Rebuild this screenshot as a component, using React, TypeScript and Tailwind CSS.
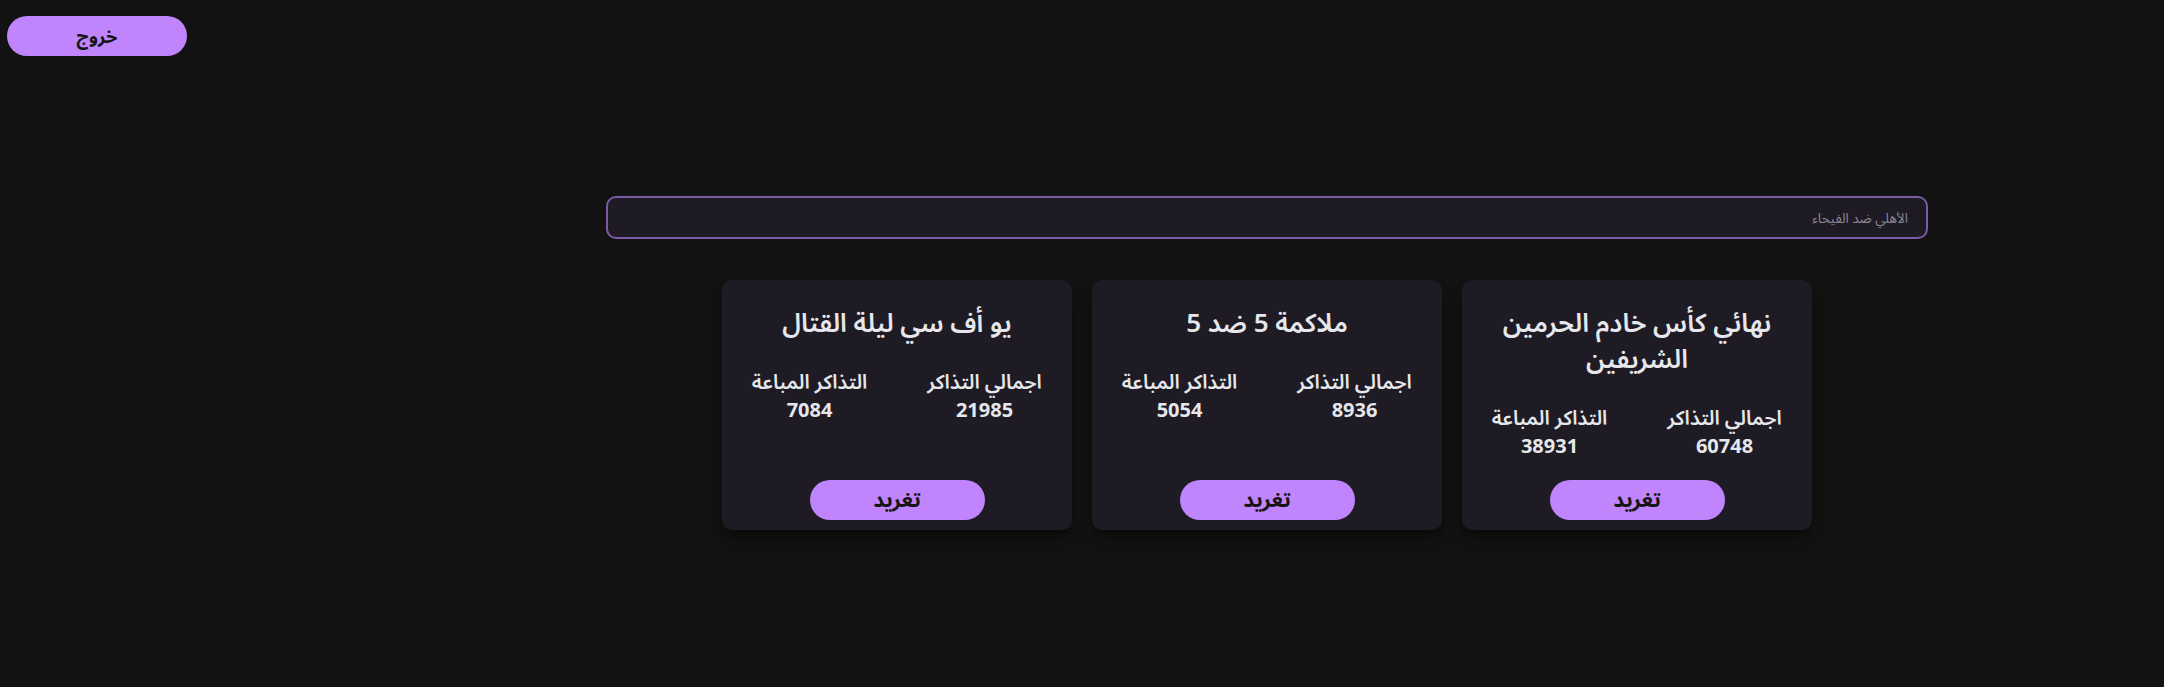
import React from 'react';

type Event = {
  title: string;
  total: number;
  sold: number;
};

const events: Event[] = [
  { title: 'نهائي كأس خادم الحرمين الشريفين', total: 60748, sold: 38931 },
  { title: 'ملاكمة 5 ضد 5', total: 8936, sold: 5054 },
  { title: 'يو أف سي ليلة القتال', total: 21985, sold: 7084 },
];

const EventCard: React.FC<{ event: Event }> = ({ event }) => {
  return (
    <div className="w-[350px] flex flex-col bg-[#1e1b25] rounded-[10px] shadow-lg shadow-black/40 pt-6 pb-[10px]">
      <h2 className="text-[26px] leading-9 font-semibold text-[#e5e7eb] text-center px-6">
        {event.title}
      </h2>
      <div className="grid grid-cols-2 mt-7 mb-5 text-[#e5e7eb]">
        <div className="flex flex-col items-center">
          <span className="text-[20px] leading-7 font-semibold">اجمالي التذاكر</span>
          <span className="text-[20px] leading-7 font-bold">{event.total}</span>
        </div>
        <div className="flex flex-col items-center">
          <span className="text-[20px] leading-7 font-semibold">التذاكر المباعة</span>
          <span className="text-[20px] leading-7 font-bold">{event.sold}</span>
        </div>
      </div>
      <div className="mt-auto flex justify-center">
        <button className="w-[175px] h-10 rounded-full bg-[#c084fc] text-[#151515] text-[21px] font-bold">
          تغريد
        </button>
      </div>
    </div>
  );
};

export default function App() {
  return (
    <div
      dir="rtl"
      className="min-h-[687px] bg-[#121212] flex flex-col"
      style={{ fontFamily: '"Noto Sans", "Noto Sans Arabic", "DejaVu Sans", sans-serif' }}
    >
      <div className="flex justify-end pt-4 pl-[7px]">
        <button className="w-[180px] h-10 rounded-full bg-[#c084fc] text-[#151515] text-[18px] font-bold">
          خروج
        </button>
      </div>

      <div className="mt-[140px] mr-[236px] ml-[606px]">
        <input
          type="text"
          placeholder="الأهلي ضد الفيحاء"
          className="w-full h-[43px] rounded-[10px] border-2 border-[#7b5aa6] bg-[#1e1b25] px-[18px] text-[13.5px] text-gray-300 placeholder:text-[#8b8794] outline-none"
        />
        <div className="flex justify-center gap-5 mt-[41px]">
          {events.map((e) => (
            <EventCard key={e.title} event={e} />
          ))}
        </div>
      </div>
    </div>
  );
}
